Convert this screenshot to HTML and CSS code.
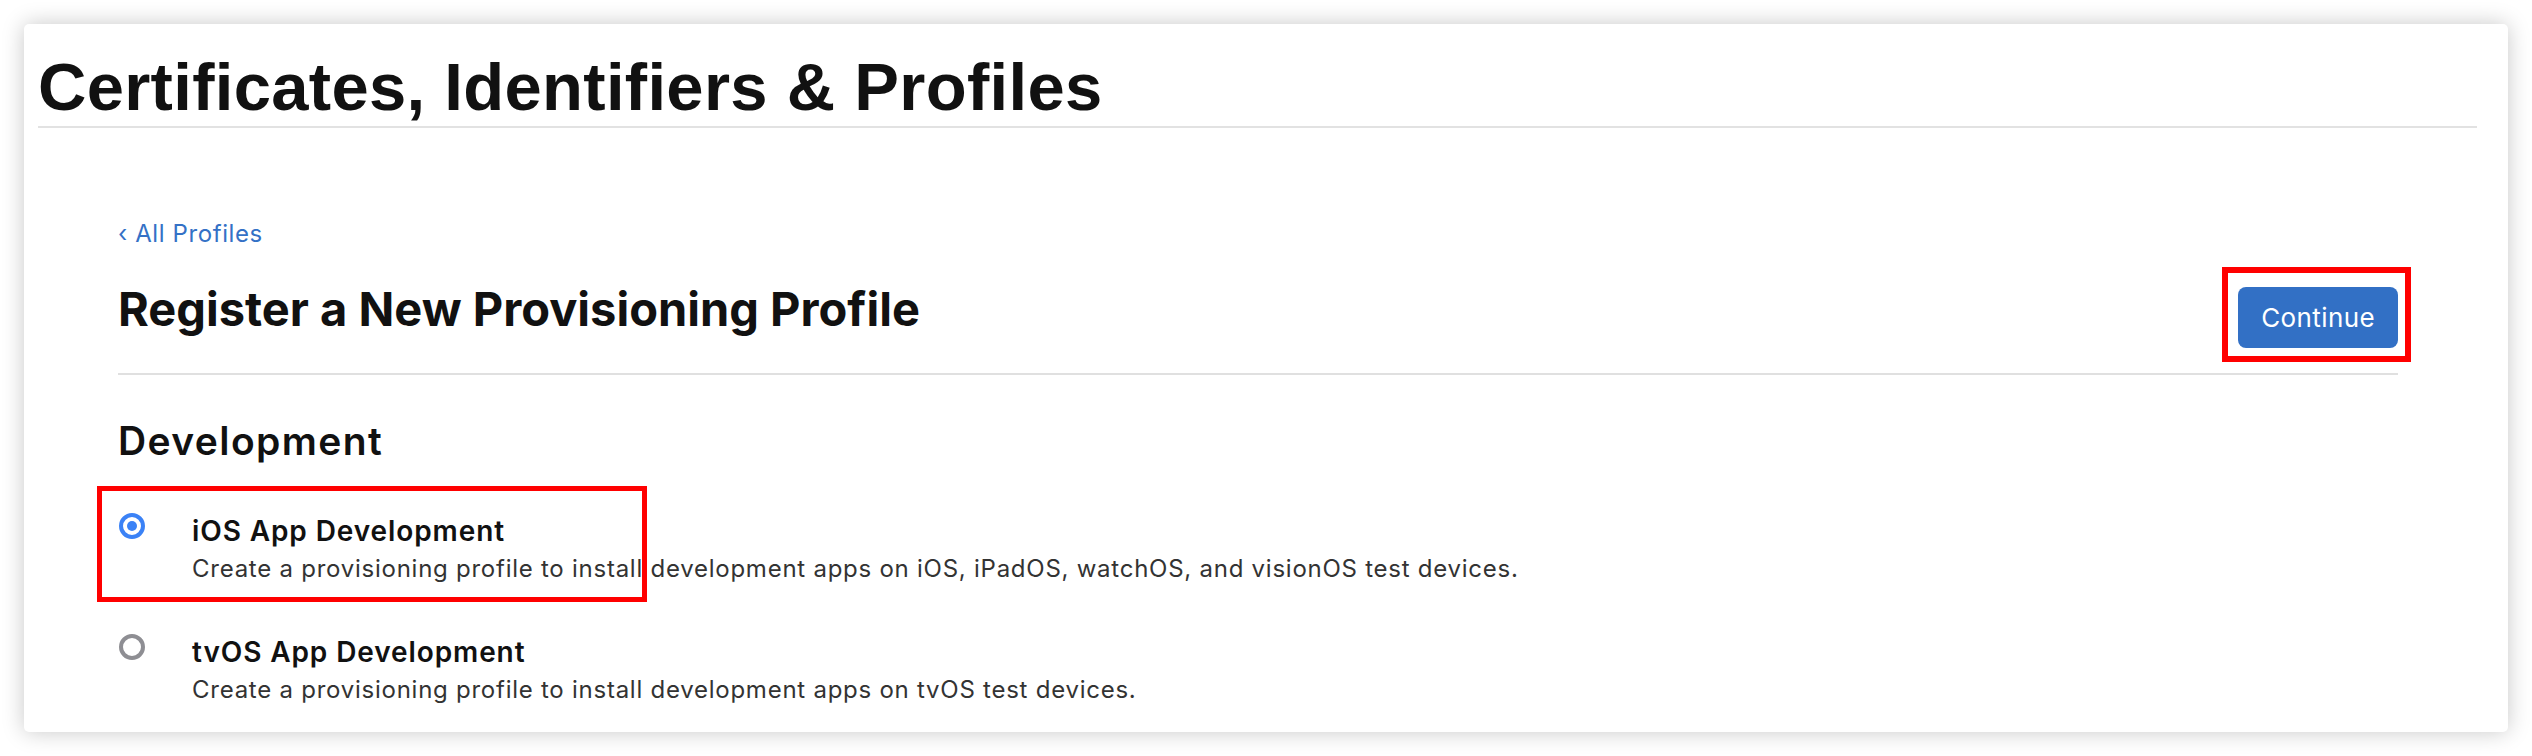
FILE: index.html
```html
<!DOCTYPE html>
<html lang="en">
<head>
<meta charset="utf-8">
<title>Certificates, Identifiers &amp; Profiles</title>
<link rel="stylesheet" href="styles.css">
</head>
<body>
<div class="window">
  <header class="page-header">
    <h1 class="page-title">Certificates, Identifiers &amp; Profiles</h1>
  </header>
  <main class="content">
    <a class="back-link" href="#"><span class="chev">‹</span> All Profiles</a>
    <div class="title-row">
      <h2 class="section-title">Register a New Provisioning Profile</h2>
      <button class="btn-continue" type="button">Continue<span class="mark mark-btn"></span></button>
    </div>
    <h3 class="group-title">Development</h3>
    <ul class="options">
      <li class="option">
        <span class="radio radio-on"></span>
        <div class="option-text">
          <div class="option-name">iOS App Development</div>
          <div class="option-desc">Create a provisioning profile to install development apps on iOS, iPadOS, watchOS, and visionOS test devices.</div>
        </div>
        <span class="mark mark-opt"></span>
      </li>
      <li class="option">
        <span class="radio"></span>
        <div class="option-text">
          <div class="option-name">tvOS App Development</div>
          <div class="option-desc">Create a provisioning profile to install development apps on tvOS test devices.</div>
        </div>
      </li>
    </ul>
  </main>
</div>
</body>
</html>
```

FILE: styles.css
```css
html, body {
  margin: 0;
  padding: 0;
  background: #ffffff;
}

body {
  font-family: Inter, "Noto Sans", sans-serif;
  color: #1d1d1f;
}

.window {
  margin: 24px;
  height: 708px;
  box-sizing: border-box;
  padding-right: 16px;
  background: #ffffff;
  border-radius: 5px;
  box-shadow: 0 0 22px rgba(0, 0, 0, 0.22);
  overflow: hidden;
}

.page-header {
  margin: 0 15px 0 14px;
  padding-top: 25px;
  padding-bottom: 1px;
  border-bottom: 2px solid #e2e2e2;
}

.page-title {
  margin: 0;
  font-family: "Liberation Sans", Arial, sans-serif;
  font-weight: 700;
  font-size: 67px;
  line-height: 76px;
  color: #111111;
  letter-spacing: 0.3px;
}

.content {
  padding: 0 94px;
}

.back-link {
  display: block;
  margin-top: 92px;
  font-size: 24px;
  line-height: 28px;
  color: #3471c6;
  text-decoration: none;
  letter-spacing: 0.6px;
}

.title-row {
  display: flex;
  justify-content: space-between;
  align-items: flex-start;
  margin-top: 31px;
  padding-bottom: 25px;
  border-bottom: 2px solid #e0e0e0;
}

.section-title {
  margin: 0;
  font-size: 47px;
  line-height: 60px;
  font-weight: 700;
  color: #111111;
  letter-spacing: 0;
}

.btn-continue {
  position: relative;
  margin-top: 8px;
  height: 61px;
  padding: 0 23px;
  border: none;
  border-radius: 8px;
  background: #3270c5;
  color: #ffffff;
  font-family: Inter, "Noto Sans", sans-serif;
  font-size: 26px;
  font-weight: 400;
  letter-spacing: 0.4px;
}

.mark {
  position: absolute;
  border: 6px solid #ff0000;
  pointer-events: none;
}

.mark-btn {
  left: -16px;
  top: -20px;
  right: -13px;
  bottom: -14px;
}

.group-title {
  margin: 44px 0 0;
  font-size: 39px;
  line-height: 44px;
  font-weight: 600;
  color: #111111;
  letter-spacing: 1.4px;
}

.options {
  list-style: none;
  margin: 51px 0 0;
  padding: 0;
  display: flex;
  flex-direction: column;
  gap: 51px;
}

.option {
  position: relative;
  display: flex;
  align-items: flex-start;
  gap: 47px;
}

.radio {
  flex: none;
  box-sizing: border-box;
  width: 26px;
  height: 26px;
  margin-left: 1px;
  margin-top: -1px;
  border-radius: 50%;
  border: 4px solid #8e8e93;
  display: flex;
  align-items: center;
  justify-content: center;
}

.radio-on {
  border-color: #3b82f6;
}

.radio-on::after {
  content: "";
  width: 10px;
  height: 10px;
  border-radius: 50%;
  background: #3b82f6;
}

.option-name {
  font-size: 28px;
  line-height: 34px;
  font-weight: 600;
  color: #111111;
  letter-spacing: 0.9px;
}

.option-desc {
  margin-top: 6px;
  font-size: 24px;
  line-height: 30px;
  color: #333333;
  letter-spacing: 0.75px;
}

.mark-opt {
  border-width: 5px;
  left: -21px;
  top: -28px;
  width: 550px;
  height: 116px;
  box-sizing: border-box;
}
```
